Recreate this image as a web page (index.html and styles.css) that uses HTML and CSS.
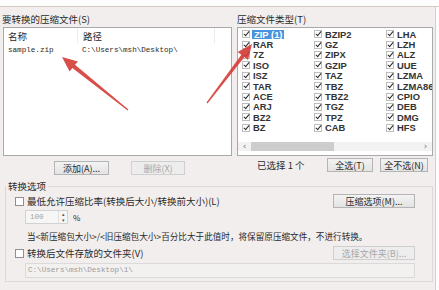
FILE: index.html
```html
<!DOCTYPE html>
<html lang="zh-CN">
<head>
<meta charset="utf-8">
<title>转换压缩文件</title>
<link rel="stylesheet" href="styles.css">
</head>
<body>
<div class="top"></div>
<div class="dialog">
  <div class="panes">
    <div class="left">
      <div class="label">要转换的压缩文件(S)</div>
      <div class="listbox">
        <div class="lhead">
          <span class="c-name">名称</span><span class="sep"></span><span class="c-path">路径</span><span class="sep sep2"></span>
        </div>
        <div class="lrow mono"><span class="c-name">sample.zip</span><span class="c-path2">C:\Users\msh\Desktop\</span></div>
      </div>
      <div class="btnrow">
        <span class="btn btn-add">添加(A)...</span>
        <span class="btn btn-del disabled">删除(X)</span>
      </div>
    </div>
    <div class="right">
      <div class="label">压缩文件类型(T)</div>
      <div class="typebox">
        <div class="types">
          <div class="t"><span class="cb on"></span><span class="sel">ZIP (1)</span></div>
          <div class="t"><span class="cb on"></span>BZIP2</div>
          <div class="t"><span class="cb on"></span>LHA</div>
          <div class="t"><span class="cb on"></span>RAR</div>
          <div class="t"><span class="cb on"></span>GZ</div>
          <div class="t"><span class="cb on"></span>LZH</div>
          <div class="t"><span class="cb on"></span>7Z</div>
          <div class="t"><span class="cb on"></span>ZIPX</div>
          <div class="t"><span class="cb on"></span>ALZ</div>
          <div class="t"><span class="cb on"></span>ISO</div>
          <div class="t"><span class="cb on"></span>GZIP</div>
          <div class="t"><span class="cb on"></span>UUE</div>
          <div class="t"><span class="cb on"></span>ISZ</div>
          <div class="t"><span class="cb on"></span>TAZ</div>
          <div class="t"><span class="cb on"></span>LZMA</div>
          <div class="t"><span class="cb on"></span>TAR</div>
          <div class="t"><span class="cb on"></span>TBZ</div>
          <div class="t"><span class="cb on"></span>LZMA86</div>
          <div class="t"><span class="cb on"></span>ACE</div>
          <div class="t"><span class="cb on"></span>TBZ2</div>
          <div class="t"><span class="cb on"></span>CPIO</div>
          <div class="t"><span class="cb on"></span>ARJ</div>
          <div class="t"><span class="cb on"></span>TGZ</div>
          <div class="t"><span class="cb on"></span>DEB</div>
          <div class="t"><span class="cb on"></span>BZ2</div>
          <div class="t"><span class="cb on"></span>TPZ</div>
          <div class="t"><span class="cb on"></span>DMG</div>
          <div class="t"><span class="cb on"></span>BZ</div>
          <div class="t"><span class="cb on"></span>CAB</div>
          <div class="t"><span class="cb on"></span>HFS</div>
        </div>
        <div class="hscroll">
          <span class="arr">&lsaquo;</span>
          <span class="thumb"></span>
          <span class="arr arr-r">&rsaquo;</span>
        </div>
      </div>
      <div class="footrow">
        <span class="count">已选择 1 个</span>
        <span class="btn btn-all">全选(T)</span>
        <span class="btn btn-none">全不选(N)</span>
      </div>
    </div>
  </div>
  <fieldset class="group">
    <legend>转换选项</legend>
    <div class="opt-row">
      <span class="cb"></span>
      <span class="opt-text">最低允许压缩比率(转换后大小/转换前大小)(L)</span>
      <span class="btn btn-wide">压缩选项(M)...</span>
    </div>
    <div class="spin-row">
      <span class="spin"><span class="spin-val mono">100</span><span class="spin-btns"><i>&#9652;</i><i>&#9662;</i></span></span>
      <span class="pct">%</span>
    </div>
    <div class="desc">当&lt;新压缩包大小&gt;/&lt;旧压缩包大小&gt;百分比大于此值时，将保留原压缩文件，不进行转换。</div>
    <div class="opt-row row2">
      <span class="cb"></span>
      <span class="opt-text">转换后文件存放的文件夹(V)</span>
      <span class="btn btn-wide disabled">选择文件夹(B)...</span>
    </div>
    <div class="pathbox mono">C:\Users\msh\Desktop\1\</div>
  </fieldset>
</div>
<svg class="arrows" width="439" height="290" viewBox="0 0 439 290">
  <polygon fill="#d43c36" fill-opacity="0.9" points="62,57 78,61.5 75,64.8 128.4,109.5 127.6,110.5 72.4,68 69.6,71.6"/>
  <polygon fill="#d43c36" fill-opacity="0.9" points="252,44 248,60 244.5,57.1 207.5,103.4 206.5,102.6 241.3,54.7 237.6,52"/>
</svg>
</body>
</html>
```
FILE: styles.css
```css
* { box-sizing: border-box; }
html, body { margin: 0; padding: 0; }
body {
  width: 439px;
  height: 290px;
  overflow: hidden;
  background: #fdfcfc;
  font-family: "Noto Sans CJK SC", "Noto Sans", sans-serif;
  font-size: 9.5px;
  color: #2a2a2a;
  position: relative;
}
.mono { font-family: "Liberation Mono", "DejaVu Sans Mono", monospace; font-size: 7.6px; }

.top { height: 7px; border-bottom: 1px solid #d6c9c6; background: #fefdfd; }
.dialog {
  width: 436px;
  height: 283px;
  background: #f1eeed;
  border-right: 1px solid #d4cfcd;
  padding-top: 6px;
}
.panes { display: flex; padding-left: 2px; }
.label { height: 12px; line-height: 12px; }
.left { width: 231px; }
.listbox {
  margin: 2px 0 0 1px;
  width: 229px;
  height: 129px;
  background: #fff;
  border: 1px solid #a9a9a9;
}
.lhead { display: flex; height: 15px; align-items: center; }
.lhead .c-name { width: 73px; padding-left: 4px; }
.lhead .c-path { width: 136px; padding-left: 5px; }
.sep { width: 1px; height: 15px; background: #ececec; }
.lrow { display: flex; height: 12px; align-items: center; margin-top: 1px; }
.lrow .c-name { width: 74px; padding-left: 4px; }
.lrow .c-path2 { padding-left: 4px; }

.btn {
  display: inline-flex;
  align-items: center;
  justify-content: center;
  height: 14px;
  border: 1px solid #b4b4b4;
  background: linear-gradient(#f3f3f3, #e3e3e3);
  font-size: 9px;
  color: #2a2a2a;
}
.btn.disabled { color: #a8a8a8; border-color: #cfcfcf; background: #ededed; }
.btnrow { display: flex; margin-top: 5px; }
.btn-add { margin-left: 52px; width: 55px; }
.btn-del { margin-left: 22px; width: 54px; }

.right { margin-left: 4px; width: 196px; }
.typebox {
  margin-top: 2px;
  height: 129px;
  background: #fff;
  border: 1px solid #a9a9a9;
  display: flex;
  flex-direction: column;
  overflow: hidden;
}
.types {
  display: grid;
  grid-template-columns: 72px 72px 72px;
  grid-auto-rows: 10.4px;
  padding: 1px 0 0 3px;
  font-family: "Liberation Sans", Arial, sans-serif;
  font-weight: bold;
  font-size: 9.4px;
  color: #333;
  white-space: nowrap;
}
.t { display: flex; align-items: center; }
.cb {
  position: relative;
  flex: none;
  width: 9px;
  height: 9px;
  border: 1px solid #8f8f8f;
  background: #fff;
}
.types .cb { width: 8px; height: 8px; margin-left: 1px; margin-right: 3px; border-color: #bdbdbd; }
.cb.on::after {
  content: "";
  position: absolute;
  left: 2px;
  top: -1px;
  width: 2px;
  height: 5px;
  border-right: 1.5px solid #2a2a2a;
  border-bottom: 1.5px solid #2a2a2a;
  transform: rotate(40deg);
}
.sel { background: #4a93de; color: #fff; padding: 0 2px; line-height: 9px; margin-left: -1px; }

.hscroll {
  margin-top: auto;
  margin-bottom: 4px;
  height: 9px;
  display: flex;
  align-items: center;
  background: #f2f2f2;
  color: #777;
  font-family: "DejaVu Sans", sans-serif;
  font-size: 9px;
}
.arr { width: 13px; text-align: center; line-height: 9px; }
.thumb { width: 83px; height: 9px; background: #cdcdcd; }
.arr-r { margin-left: auto; }

.footrow { display: flex; align-items: center; margin-top: 2px; }
.count { margin-left: 20px; width: 70px; }
.btn-all { width: 46px; }
.btn-none { width: 48px; margin-left: 7px; }

.group {
  margin: 5px 0 0 5px;
  width: 428px;
  padding: 2px 0 3px 0;
  border: 1px solid #dcd8d6;
}
.group legend { padding: 0 2px; margin-left: 0; line-height: 12px; }
.opt-row { display: flex; align-items: center; height: 14px; }
.opt-row .cb { margin-left: 9px; }
.opt-text { margin-left: 3px; }
.btn-wide { margin-left: auto; margin-right: 17px; width: 82px; }
.row2 { margin-top: 4px; }
.spin-row { display: flex; align-items: center; margin-top: 2px; height: 14px; }
.spin {
  margin-left: 19px;
  width: 43px;
  height: 14px;
  border: 1px solid #d2d2d2;
  background: #f6f6f6;
  display: flex;
  align-items: center;
  color: #a3a3a3;
}
.spin-val { padding-left: 4px; flex: 1; }
.spin-btns {
  width: 9px;
  height: 12px;
  display: flex;
  flex-direction: column;
  font-size: 5px;
  line-height: 6px;
  color: #555;
  border-left: 1px solid #e2e2e2;
}
.spin-btns i { font-style: normal; text-align: center; }
.pct { margin-left: 5px; font-size: 8px; }
.desc { margin: 6px 0 0 21px; line-height: 12px; white-space: nowrap; font-size: 8.6px; }
.pathbox {
  margin: 3px 17px 0 19px;
  height: 15px;
  border: 1px solid #dadada;
  background: #f3f1f0;
  color: #9a9a9a;
  padding-left: 2px;
  line-height: 13px;
}

.arrows { position: absolute; left: 0; top: 0; pointer-events: none; }
```
